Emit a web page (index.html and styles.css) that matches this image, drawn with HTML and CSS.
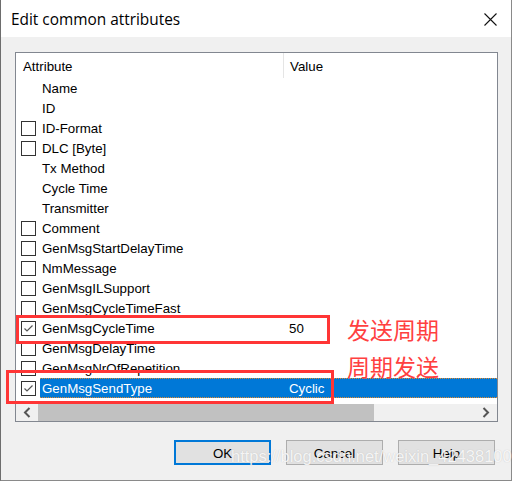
FILE: index.html
```html
<!DOCTYPE html>
<html>
<head>
<meta charset="utf-8">
<link rel="stylesheet" href="styles.css">
</head>
<body>
<div class="window">
  <div class="titlebar">
    <span class="title">Edit common attributes</span>
    <svg class="close" width="13" height="13" viewBox="0 0 13 13"><path d="M0.5 0.5 L12.5 12.5 M12.5 0.5 L0.5 12.5" stroke="#111" stroke-width="1.1" fill="none"/></svg>
  </div>
  <div class="content">
    <div class="listbox">
      <div class="header">
        <div class="col-attr">Attribute</div>
        <div class="col-val">Value</div>
      </div>
      <div class="rows">
        <div class="row"><span class="cb none"></span><span class="name">Name</span></div>
        <div class="row"><span class="cb none"></span><span class="name">ID</span></div>
        <div class="row"><span class="cb"></span><span class="name">ID-Format</span></div>
        <div class="row"><span class="cb"></span><span class="name">DLC [Byte]</span></div>
        <div class="row"><span class="cb none"></span><span class="name">Tx Method</span></div>
        <div class="row"><span class="cb none"></span><span class="name">Cycle Time</span></div>
        <div class="row"><span class="cb none"></span><span class="name">Transmitter</span></div>
        <div class="row"><span class="cb"></span><span class="name">Comment</span></div>
        <div class="row"><span class="cb"></span><span class="name">GenMsgStartDelayTime</span></div>
        <div class="row"><span class="cb"></span><span class="name">NmMessage</span></div>
        <div class="row"><span class="cb"></span><span class="name">GenMsgILSupport</span></div>
        <div class="row"><span class="cb"></span><span class="name">GenMsgCycleTimeFast</span></div>
        <div class="row"><span class="cb checked"><svg width="11" height="11" viewBox="0 0 11 11"><path d="M1.5 5.5 L4 8 L9.5 2.5" stroke="#555" stroke-width="1.2" fill="none"/></svg></span><span class="name">GenMsgCycleTime</span><span class="value">50</span></div>
        <div class="row"><span class="cb"></span><span class="name">GenMsgDelayTime</span></div>
        <div class="row"><span class="cb"></span><span class="name">GenMsgNrOfRepetition</span></div>
        <div class="row selected"><span class="cb checked"><svg width="11" height="11" viewBox="0 0 11 11"><path d="M1.5 5.5 L4 8 L9.5 2.5" stroke="#555" stroke-width="1.2" fill="none"/></svg></span><span class="sel"><span class="name">GenMsgSendType</span><span class="value">Cyclic</span></span></div>
      </div>
      <div class="hscroll">
        <span class="arrow left"><svg width="8" height="11" viewBox="0 0 8 11"><path d="M6.5 1 L2 5.5 L6.5 10" stroke="#555" stroke-width="2" fill="none"/></svg></span>
        <span class="thumb"></span>
        <span class="track"></span>
        <span class="arrow right"><svg width="8" height="11" viewBox="0 0 8 11"><path d="M1.5 1 L6 5.5 L1.5 10" stroke="#555" stroke-width="2" fill="none"/></svg></span>
      </div>
    </div>
    <div class="buttons">
      <button class="btn default">OK</button>
      <button class="btn">Cancel</button>
      <button class="btn">Help</button>
    </div>
  </div>
  <div class="redbox box1"></div>
  <div class="redbox box2"></div>
  <div class="note note1">发送周期</div>
  <div class="note note2">周期发送</div>
  <div class="watermark">https://blog.csdn.net/weixin_42438100</div>
</div>
</body>
</html>
```
FILE: styles.css
```css
* { box-sizing: border-box; }
html, body { margin: 0; padding: 0; }
body { width: 512px; height: 481px; overflow: hidden; background: #f0f0f0; }

.window {
  position: relative;
  width: 512px;
  height: 481px;
  background: #f0f0f0;
  border-left: 1px solid #6d6d6d;
  border-right: 1px solid #8a8a8a;
  border-bottom: 1px solid #8a8a8a;
  font-family: "Liberation Sans", Arial, sans-serif;
}

.titlebar {
  height: 37px;
  background: #fff;
  display: flex;
  align-items: center;
  justify-content: space-between;
  padding: 0 14px 0 10px;
}
.title {
  font-family: "Open Sans", "Noto Sans", sans-serif;
  font-size: 15.4px;
  color: #000;
  margin-top: 1px;
}
.close { display: block; margin-top: 1px; }

.content { padding: 15px 0 0 14px; }

.listbox {
  width: 483px;
  height: 370px;
  border: 1px solid #828790;
  background: #fff;
  display: flex;
  flex-direction: column;
  font-size: 13.3px;
  color: #000;
}

.header {
  height: 25px;
  display: flex;
  align-items: center;
  flex: none;
}
.col-attr { width: 267px; padding-left: 7px; height: 25px; line-height: 27px; }
.col-val { flex: 1; padding-left: 6px; border-left: 1px solid #e5e5e5; height: 25px; line-height: 27px; }

.rows { flex: none; }
.row {
  height: 20px;
  display: flex;
  align-items: center;
  padding-left: 5px;
  position: relative;
}
.cb {
  width: 15px;
  height: 15px;
  border: 1px solid #333;
  background: #fff;
  flex: none;
  margin-right: 5px;
  display: flex;
  align-items: center;
  justify-content: center;
}
.cb.none { border-color: transparent; background: transparent; }
.name { width: 248px; padding-left: 1px; white-space: nowrap; }
.value { padding-left: 0; }

.selected .sel {
  flex: 1;
  height: 20px;
  display: flex;
  align-items: center;
  background: #0078d7;
  color: #fff;
  border-top: 1px dotted #e38a2c;
  border-bottom: 1px dotted #e38a2c;
  margin-left: -1px;
  padding-left: 1px;
}

.hscroll {
  margin-top: auto;
  height: 17px;
  display: flex;
  align-items: center;
  background: #f0f0f0;
  flex: none;
}
.arrow { width: 22px; height: 17px; display: flex; align-items: center; justify-content: center; flex: none; }
.thumb { width: 336px; height: 17px; background: #c1c1c1; flex: none; }
.track { flex: 1; }

.buttons {
  display: flex;
  gap: 15px;
  padding-left: 159px;
  margin-top: 18px;
}
.btn {
  width: 97px;
  height: 25px;
  background: #e1e1e1;
  border: 1px solid #adadad;
  font-family: "Liberation Sans", Arial, sans-serif;
  font-size: 13.3px;
  color: #000;
  padding: 2px 0 0 0;
  margin: 0;
}
.btn.default { border: 2px solid #0078d7; }

.redbox {
  position: absolute;
  border: 3px solid #ff3535;
}
.box1 { left: 15px; top: 315px; width: 314px; height: 29px; }
.box2 { left: 5px; top: 370px; width: 328px; height: 34px; }

.note {
  position: absolute;
  font-family: "Noto Sans CJK SC", sans-serif;
  font-size: 23px;
  line-height: 23px;
  color: #ff4040;
  left: 346px;
}
.note1 { top: 318px; }
.note2 { top: 355px; }

.watermark {
  position: absolute;
  left: 230px;
  top: 447px;
  font-family: "Liberation Sans", Arial, sans-serif;
  font-size: 16.5px;
  color: rgba(255, 255, 255, 0.85);
  text-shadow: 0 0 1px rgba(140, 140, 140, 0.45);
  white-space: nowrap;
}
```
